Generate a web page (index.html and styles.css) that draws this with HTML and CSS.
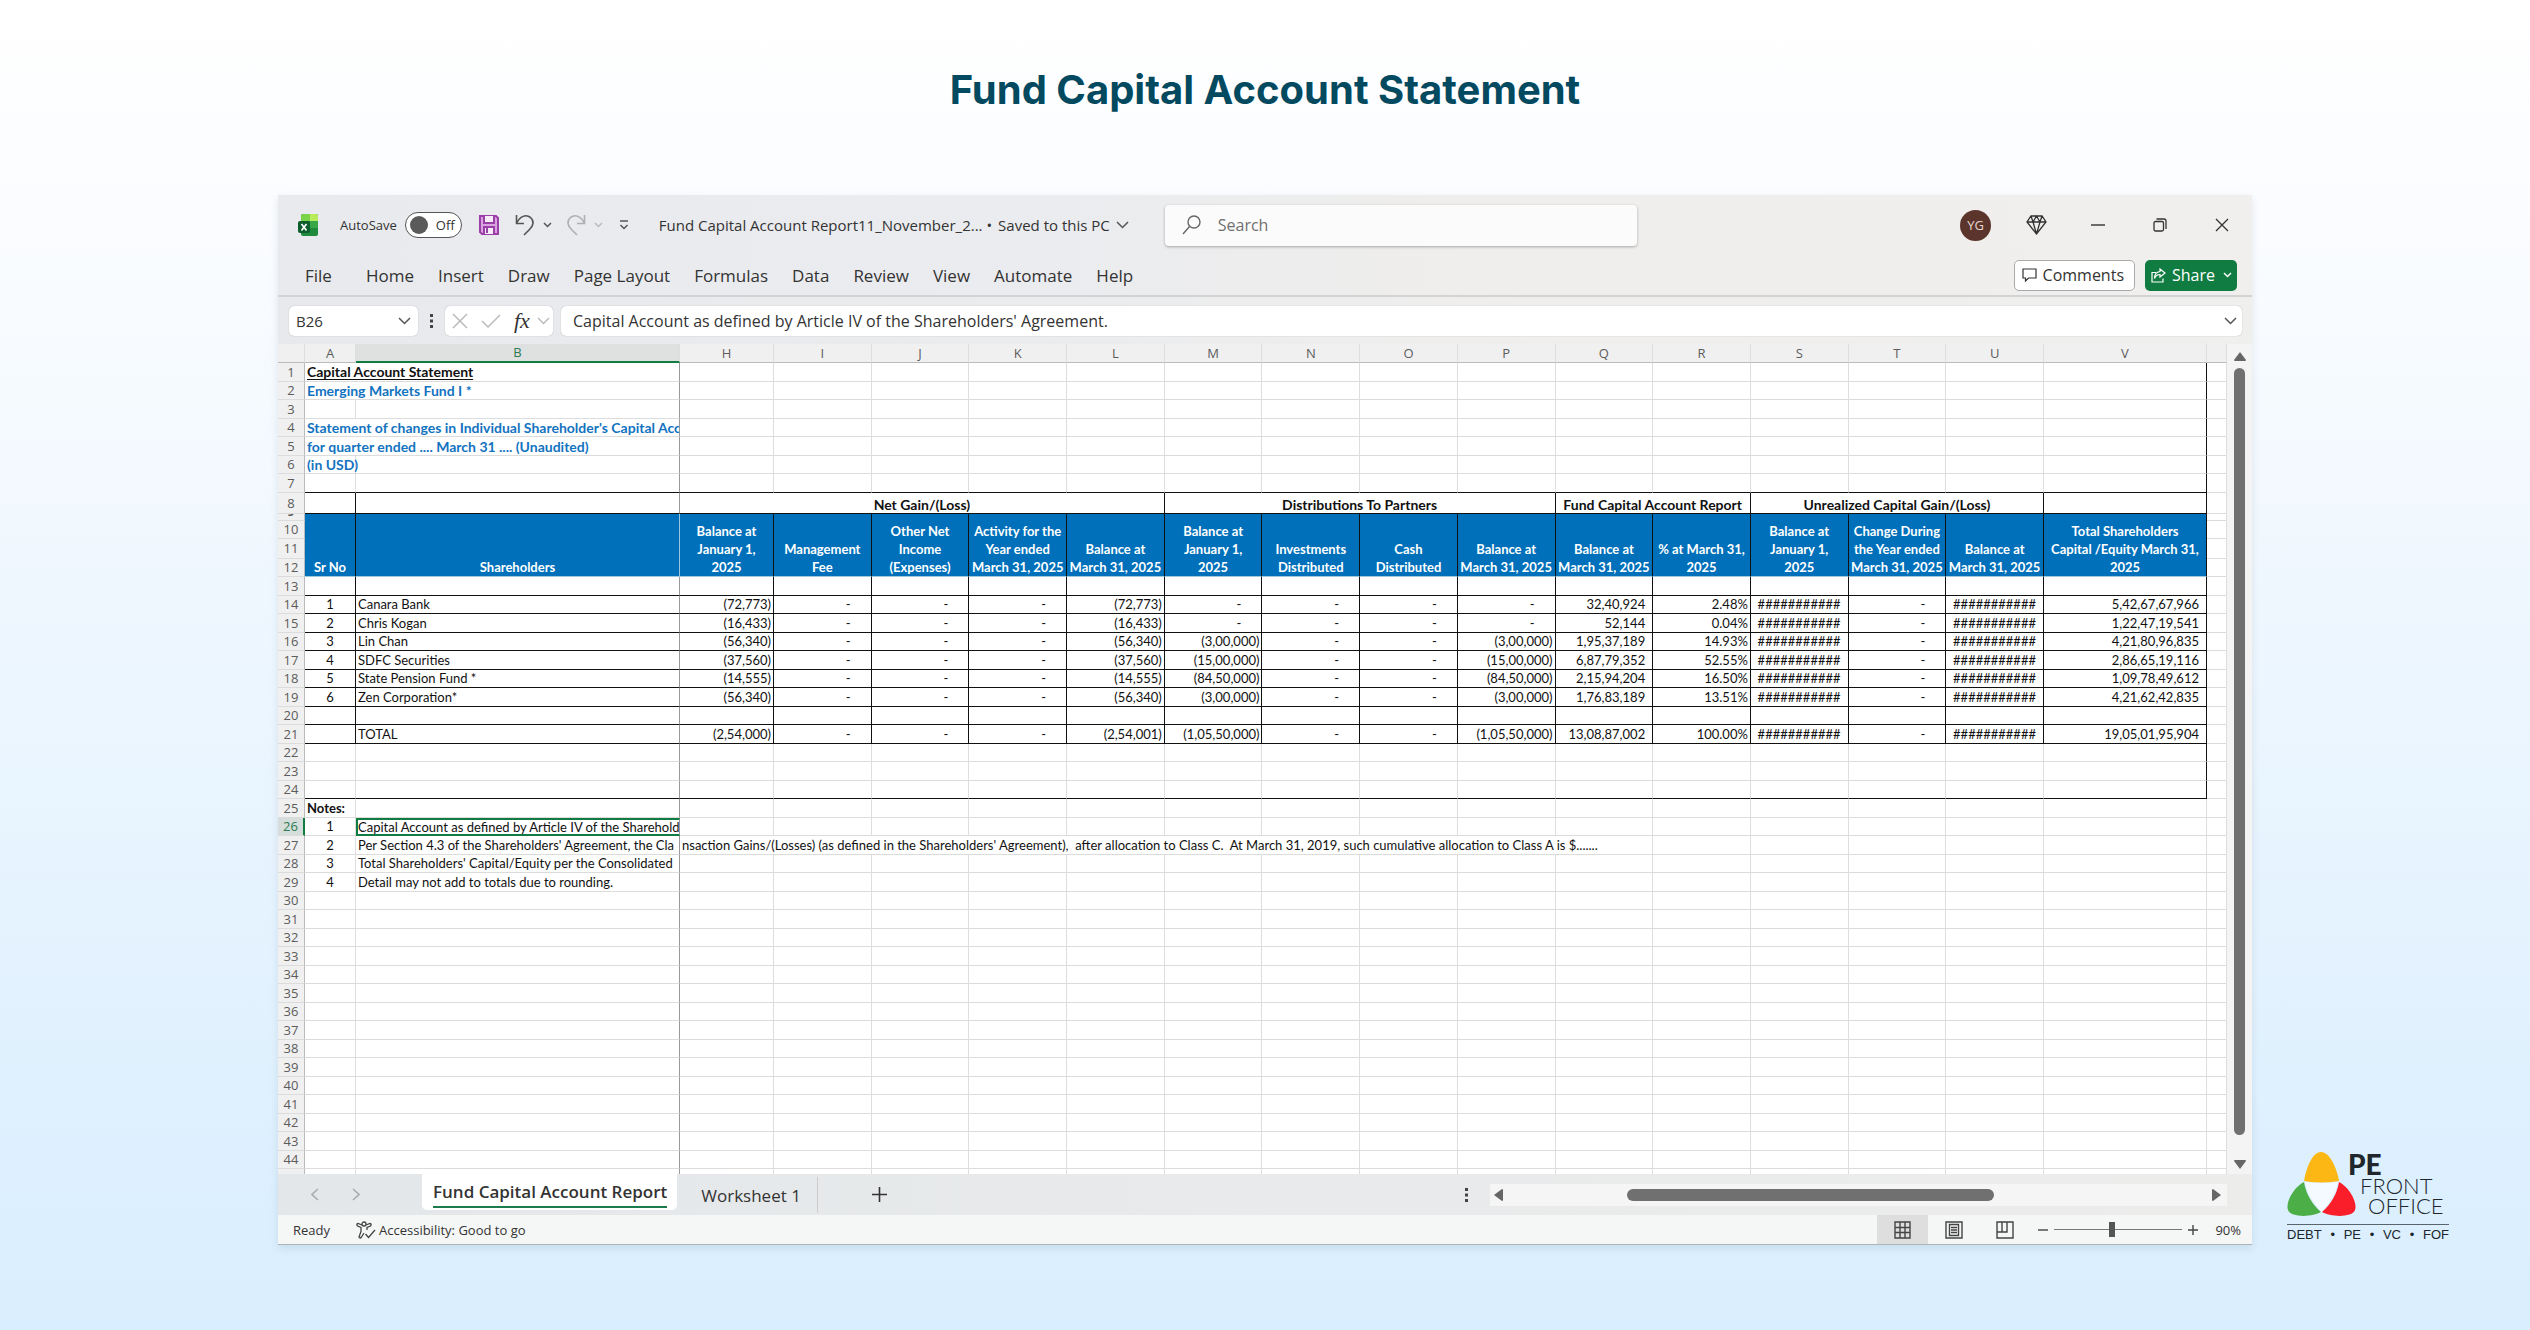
FILE: index.html
```html
<!DOCTYPE html>
<html lang="en">
  <head>
    <meta charset="utf-8">
    <title>Fund Capital Account Statement</title>
    <link rel="stylesheet" href="styles.css">
  </head>
  <body>
    <h1>Fund Capital Account Statement</h1>
    <main>
      <div class="window">
        <header>
          <div class="titlebar">
            <svg class="xl" width="20" height="22" viewBox="0 0 20 22"><rect x="3" y="0" width="17" height="22" rx="2" fill="#1f8a3c"/><path d="M5 0h7v7H3V2a2 2 0 0 1 2-2z" fill="#7bd34a"/><path d="M12 0h6a2 2 0 0 1 2 2v5h-8z" fill="#b8ec5a"/><path d="M12 7h8v7h-8z" fill="#38a745"/><rect x="0" y="7" width="12" height="12" rx="2" fill="#0d5c2c"/><path d="M3.5 10l5 6.500M8.500 10l-5 6.500" stroke="#fff" stroke-width="1.700"/></svg>
            <label class="autosave">AutoSave <span class="toggle"><input type="checkbox"><span>Off</span></span></label>
            <button class="save" aria-label="Save"><svg width="22" height="22" viewBox="0 0 22 22" fill="none" stroke="#9b3fa8" stroke-width="2"><path d="M2 2h16l2 2v16H4l-2-2z" fill="#d9a3e0"/><path d="M6 2v7h10V2M6 20v-7h10v7" fill="#f6ecf8"/><path d="M9 14v5"/></svg></button>
            <button class="undo" aria-label="Undo"><svg width="20" height="24" viewBox="0 0 20 24" fill="none" stroke="#555" stroke-width="1.600"><path d="M1.500 2v8.500H9M1.500 10.500C5 3 11 1 15.500 4.500c4 3.500 3 8-1 12L9 22"/></svg></button>
            <button class="more" aria-label="Undo list"><svg width="9" height="6" viewBox="0 0 9 6"><path d="M1 1l3.500 3.500L8 1"/></svg></button>
            <button class="redo" aria-label="Redo"><svg width="20" height="24" viewBox="0 0 20 24" fill="none" stroke="#aeb0b3" stroke-width="1.600"><path d="M18.500 2v8.500H11M18.500 10.500C15 3 9 1 4.500 4.500c-4 3.500-3 8 1 12L11 22"/></svg></button>
            <button class="more faint" aria-label="Redo list"><svg width="9" height="6" viewBox="0 0 9 6"><path d="M1 1l3.500 3.500L8 1"/></svg></button>
            <button class="more custom" aria-label="Customize toolbar"><svg width="10" height="10" viewBox="0 0 10 10"><path d="M1 1h8M1.500 5L5 8.500 8.500 5"/></svg></button>
            <div class="doc">Fund Capital Account Report11_November_2... • <span>Saved to this PC</span> <svg width="13" height="8" viewBox="0 0 13 8"><path d="M1 1l5.500 5.500L12 1"/></svg></div>
            <label class="search"><svg width="19" height="20" viewBox="0 0 19 20" fill="none" stroke="#666" stroke-width="1.400"><circle cx="12" cy="7" r="6"/><path d="M7.500 11.500L1 19"/></svg><input type="text" placeholder="Search" aria-label="Search"></label>
            <div class="controls">
              <button class="avatar">YG</button>
              <button aria-label="Premium"><svg width="21" height="20" viewBox="0 0 21 20" fill="none" stroke="#333" stroke-width="1.300"><path d="M5 1h11l4 6-9.500 12L1 7zM1 7h19M7 7l3.500 12L14 7M5 1l2 6 3.500-6L14 7l2-6"/></svg></button>
              <button aria-label="Minimize"><svg width="14" height="14" viewBox="0 0 14 14" stroke="#333" stroke-width="1.400"><path d="M0 7h14"/></svg></button>
              <button aria-label="Restore"><svg width="14" height="14" viewBox="0 0 14 14" fill="none" stroke="#333" stroke-width="1.300"><rect x="1" y="3.500" width="9.500" height="9.500" rx="1.500"/><path d="M3.500 1H11a2 2 0 0 1 2 2v8"/></svg></button>
              <button aria-label="Close"><svg width="14" height="14" viewBox="0 0 14 14" stroke="#333" stroke-width="1.300"><path d="M1 1l12 12M13 1L1 13"/></svg></button>
            </div>
          </div>
          <nav>
            <a href="#" class="file">File</a>
            <a href="#">Home</a>
            <a href="#">Insert</a>
            <a href="#">Draw</a>
            <a href="#">Page Layout</a>
            <a href="#">Formulas</a>
            <a href="#">Data</a>
            <a href="#">Review</a>
            <a href="#">View</a>
            <a href="#">Automate</a>
            <a href="#">Help</a>
            <button class="comments"><svg width="15" height="14" viewBox="0 0 15 14" fill="none" stroke="#333" stroke-width="1.200"><path d="M1 1h13v9H6.500L3.500 13v-3H1z"/></svg>Comments</button>
            <button class="share"><svg width="15" height="15" viewBox="0 0 15 15" fill="none" stroke="#fff" stroke-width="1.200"><path d="M5 4.500H1V14h11v-3.500M9 1l5 4-5 4V6.500C6 6.500 4.500 8 3.500 10.500 3.500 6.500 5.500 4 9 3.500z"/></svg>Share<svg class="down" width="9" height="6" viewBox="0 0 9 6"><path d="M1 1l3.500 3.500L8 1"/></svg></button>
          </nav>
        </header>

        <div class="formulabar">
          <label class="box namebox"><input type="text" value="B26" aria-label="Name box"><svg width="13" height="8" viewBox="0 0 13 8"><path d="M1 1l5.500 5.500L12 1"/></svg></label>
          <svg class="dots" width="3" height="14" viewBox="0 0 3 14"><path d="M0 0h3v3H0zM0 5.500h3v3H0zM0 11h3v3H0z"/></svg>
          <div class="box fx">
            <button aria-label="Cancel"><svg width="16" height="16" viewBox="0 0 16 16"><path d="M1 1l14 14M15 1L1 15"/></svg></button>
            <button aria-label="Enter"><svg width="20" height="14" viewBox="0 0 20 14"><path d="M1 7l6 6L19 1"/></svg></button>
            <button class="fn" aria-label="Insert function">fx</button>
            <button aria-label="Function list"><svg width="13" height="8" viewBox="0 0 13 8"><path d="M1 1l5.500 5.500L12 1"/></svg></button>
          </div>
          <label class="box formula"><input type="text" value="Capital Account as defined by Article IV of the Shareholders' Agreement." aria-label="Formula"><svg width="13" height="8" viewBox="0 0 13 8"><path d="M1 1l5.500 5.500L12 1"/></svg></label>
        </div>

        <div class="sheet">
          <div class="cells">
            <table id="grid">
              <colgroup><col class="c-num"><col class="c-a"><col class="c-b"><col class="c-h"><col span="13"><col class="c-v"><col class="c-x"></colgroup>
              <thead></thead>
              <tbody></tbody>
            </table>
          </div>
          <div class="vscroll">
            <svg width="12" height="9" viewBox="0 0 12 9"><path d="M6 0l6 8q0 1-1 1H1q-1 0-1-1z"/></svg>
            <div class="thumb"></div>
            <svg width="12" height="9" viewBox="0 0 12 9"><path d="M6 9l6-8q0-1-1-1H1Q0 0 0 1z"/></svg>
          </div>
        </div>

        <div class="tabs">
          <button class="step" aria-label="Previous sheet"><svg width="8" height="13" viewBox="0 0 8 13"><path d="M7 1L1 6.500 7 12"/></svg></button>
          <button class="step next" aria-label="Next sheet"><svg width="8" height="13" viewBox="0 0 8 13"><path d="M1 1l6 5.500L1 12"/></svg></button>
          <button class="tab active"><span>Fund Capital Account Report</span></button>
          <button class="tab">Worksheet 1</button>
          <button class="add" aria-label="New sheet"><svg width="15" height="15" viewBox="0 0 15 15"><path d="M7.500 0v15M0 7.500h15"/></svg></button>
          <svg class="dots" width="3" height="14" viewBox="0 0 3 14"><path d="M0 0h3v3H0zM0 5.500h3v3H0zM0 11h3v3H0z"/></svg>
          <div class="hscroll">
            <svg width="9" height="12" viewBox="0 0 9 12"><path d="M0 6l8-6q1 0 1 1v10q0 1-1 1z"/></svg>
            <div class="track"><div class="thumb"></div></div>
            <svg width="9" height="12" viewBox="0 0 9 12"><path d="M9 6L1 0Q0 0 0 1v10q0 1 1 1z"/></svg>
          </div>
        </div>

        <footer>
          <span class="ready">Ready</span>
          <svg width="20" height="18" viewBox="0 0 20 18" fill="none" stroke="#444" stroke-width="1.300"><circle cx="8" cy="3" r="2"/><path d="M6 4L2 2.500Q0 3 1.500 5L5 6.500v4L3 16q1 2 2.500 0L8 12M10 4l4-1.500q2 .5.500 2.500L11 6.500V9M9.500 13l3 3.500L19 9"/></svg>
          <span class="access">Accessibility: Good to go</span>
          <div class="views">
            <button class="on" aria-label="Normal"><svg width="17" height="18" viewBox="0 0 17 18"><path d="M1 1h15v16H1zM6 1v16M11 1v16M1 6.500h15M1 11.500h15"/></svg></button>
            <button aria-label="Page layout"><svg width="18" height="18" viewBox="0 0 18 18"><path d="M1 1h16v16H1zM4.500 3.500h9v11h-9zM6 6.500h6M6 9h6M6 11.500h6"/></svg></button>
            <button aria-label="Page break preview"><svg width="18" height="18" viewBox="0 0 18 18"><path d="M1 1h16v16H1zM1 11h10V1M6 1v10"/></svg></button>
          </div>
          <button class="zoom" aria-label="Zoom out"><svg width="10" height="10" viewBox="0 0 10 10"><path d="M0 5h10"/></svg></button>
          <input type="range" min="0" max="100" value="45" aria-label="Zoom">
          <button class="zoom" aria-label="Zoom in"><svg width="10" height="10" viewBox="0 0 10 10"><path d="M0 5h10M5 0v10"/></svg></button>
          <span class="percent">90%</span>
        </footer>
      </div>

      <div class="logo">
        <div class="mark">
          <svg width="69" height="64" viewBox="0 0 69 64">
            <path d="M34 0C43 0 50 17 52 29Q34 32 17 29C19 17 25 0 34 0z" fill="#fdb714"/>
            <path d="M17 30C8 34-2 50 1 58c3 8 25 7 33 2C25 52 19 42 17 30z" fill="#4cae47"/>
            <path d="M52 30c9 4 19 20 16 28-3 8-25 7-33 2C44 52 50 42 52 30z" fill="#f91e29"/>
            <path d="M18 30Q34 32 51 30 48 46 34.500 60 21 46 18 30z" fill="#f4faff"/>
          </svg>
          <div class="words"><b>PE</b><span>FRONT</span><span class="office">OFFICE</span></div>
        </div>
        <div class="tags"><span>DEBT</span><span>•</span><span>PE</span><span>•</span><span>VC</span><span>•</span><span>FOF</span></div>
      </div>
    </main>
    <script src="sheet.js"></script>
  </body>
</html>
```

FILE: styles.css
```css
* {
  margin: 0;
  padding: 0;
  box-sizing: border-box;
}
body {
  min-height: 100vh;
  background: linear-gradient(#ffffff, #fafcff 18%, #def0fe 85%, #d9eefe);
  font-family: "Open Sans", "Noto Sans", sans-serif;
  color: #333;
}
button, input {
  font: inherit;
  color: inherit;
  border: 0;
  background: none;
  outline: 0;
}
button {
  display: flex;
  align-items: center;
}
svg {
  flex: none;
  display: block;
}
h1 {
  padding: 66px 0 81px;
  font: 700 40px/48px Inter, sans-serif;
  color: #034a60;
  text-align: center;
}
main {
  display: flex;
  align-items: flex-end;
  padding: 0 81px 0 278px;
}
.window {
  flex: 1;
  min-width: 0;
  background: #f0f0f0;
  border-bottom: 1px solid #aab4ba;
  box-shadow: 0 3px 8px rgba(60,80,90,0.12);
}

/* title bar and menu */
header {
  background: linear-gradient(90deg, #e8eaed, #ebecef 40%, #efeeec 60%, #f0efee);
  border-bottom: 2px solid #d2d3d5;
}
.titlebar {
  display: flex;
  align-items: center;
  height: 60px;
  padding: 0 23px 0 20px;
  font-size: 15px;
}
.autosave {
  display: flex;
  align-items: center;
  gap: 8px;
  margin-left: 22px;
  font-size: 13px;
}
.toggle {
  display: flex;
  align-items: center;
  width: 57px;
  height: 26px;
  padding-left: 4px;
  gap: 8px;
  border: 1px solid #555;
  border-radius: 13px;
  background: #fff;
}
.toggle input {
  appearance: none;
  width: 18px;
  height: 18px;
  border-radius: 50%;
  background: #5a5a5a;
}
.save { margin-left: 16px; }
.undo { margin-left: 15px; }
.redo { margin-left: 14px; }
.more { margin-left: 8px; }
.custom { margin-left: 16px; }
.more svg, .doc svg, .box svg, .down {
  fill: none;
  stroke: #555;
  stroke-width: 1.5;
}
.more.faint svg { stroke: #bbb; }
.doc {
  display: flex;
  align-items: center;
  gap: 6px;
  margin-left: 30px;
  white-space: nowrap;
}
.search {
  display: flex;
  align-items: center;
  gap: 17px;
  width: 472px;
  height: 41px;
  margin-left: 36px;
  padding-left: 17px;
  background: #fbfbfb;
  border-radius: 4px;
  box-shadow: 0 1px 3px rgba(0,0,0,0.3);
  font-size: 16px;
}
.search input { flex: 1; }
.search input::placeholder {
  color: #707070;
  opacity: 1;
}
.controls {
  display: flex;
  align-items: center;
  margin-left: auto;
  gap: 48px;
}
.controls .avatar {
  justify-content: center;
  width: 31px;
  height: 31px;
  margin-right: -13px;
  border-radius: 50%;
  background: #5b352c;
  color: #e8d6d0;
  font-size: 13px;
}
.controls button:nth-child(2) { margin-right: -4px; }
nav {
  display: flex;
  align-items: center;
  gap: 24px;
  height: 40px;
  padding: 0 15px 0 27px;
  font-size: 17px;
}
nav a {
  color: #333;
  text-decoration: none;
}
.file { margin-right: 10px; }
.comments, .share {
  gap: 6px;
  height: 31px;
  padding: 0 10px 0 7px;
  border-radius: 5px;
  font-size: 16px;
}
.comments {
  margin-left: auto;
  margin-right: -14px;
  border: 1px solid #aaa;
  background: #fff;
}
.share {
  background: #107c41;
  color: #fff;
  padding: 0 5px 0 6px;
}
.share .down {
  stroke: #fff;
  margin-left: 2px;
}

/* formula bar */
.formulabar {
  display: flex;
  align-items: center;
  height: 47px;
  padding: 0 10px 0 11px;
  background: linear-gradient(90deg, #e7e9ec, #ebecee 40%, #efeeed 60%, #efefee);
  font-size: 16px;
}
.box {
  display: flex;
  align-items: center;
  height: 30px;
  padding: 0 7px;
  border-radius: 5px;
  background: #fff;
  box-shadow: 0 0 1px rgba(0,0,0,0.35);
}
.box input {
  flex: 1;
  width: 100%;
  min-width: 0;
}
.namebox {
  width: 129px;
  font-size: 15px;
}
.dots {
  margin: 0 12px;
  fill: #444;
}
.fx {
  gap: 13px;
  width: 108px;
  padding: 0 2px 0 7px;
}
.fx svg { stroke: #bbb; }
.fx .fn {
  margin-right: -6px;
  font: italic 22px/22px "Liberation Serif", serif;
}
.formula {
  flex: 1;
  margin-left: 8px;
  padding: 0 5px 0 12px;
}

/* worksheet */
.sheet {
  display: flex;
  height: 830px;
  overflow: hidden;
}
.cells {
  flex: 1;
  min-width: 0;
}
table {
  width: 100%;
  table-layout: fixed;
  border-collapse: separate;
  border-spacing: 0;
  font: 13px/17px Lato, sans-serif;
  color: #111;
}
.c-num { width: 27px; }
.c-a { width: 51px; }
.c-b { width: 324px; }
.c-h { width: 94px; }
.c-v { width: 163px; }
.c-x { width: 20px; }
tr { height: 18px; }
tbody tr:nth-child(odd) { height: 19px; }
tbody tr.group { height: 21px; }
tbody tr.thin { height: 7px; }
.thin .num span {
  display: flex;
  align-items: flex-end;
  justify-content: center;
  height: 6px;
  overflow: hidden;
}
td, th {
  padding: 0 2px;
  border-right: 1px solid #dedede;
  border-bottom: 1px solid #dcdcdc;
  background: #fff;
  white-space: nowrap;
  overflow: hidden;
  text-align: left;
}
td.col-b {
  border-right-color: #999;
}
thead th, th.num {
  background: #f0f0f0;
  color: #5c5c5c;
  font: 13px/17px "Open Sans", sans-serif;
  text-align: center;
}
thead th {
  height: 19px;
  border-bottom-color: #bbb;
}
thead th.col-b {
  background: #dfe0e0;
  color: #2b7a50;
  border-bottom: 2px solid #107c41;
}
th.num {
  padding: 0;
  border-right-color: #bbb;
}
th.sel {
  background: #d5dedb;
  color: #2b7a50;
  border-right: 2px solid #107c41;
}
.title {
  font-size: 14px;
  line-height: 16px;
  font-weight: bold;
  text-decoration: underline;
  text-decoration-thickness: 1px;
  text-decoration-skip-ink: none;
  text-underline-offset: 2px;
}
.blue {
  font-size: 14px;
  font-weight: bold;
  color: #1373bf;
}
.bold { font-weight: bold; }
td.spill { overflow: visible; }
.col-v.edge, .line { border-right-color: #111; }
.under td:not(.x) { border-bottom-color: #111; }
.group td, .head th {
  font-weight: bold;
  text-align: center;
}
.group td {
  vertical-align: bottom;
  font-size: 14px;
}
.head th:not(.num) {
  height: 63px;
  vertical-align: bottom;
  background: #0070ba;
  color: #fff;
  line-height: 18px;
  border-right-color: #111;
  border-bottom: 1px solid #9cc7e0;
  padding: 0;
}
.head th.col-b:not(.num) { border-right-color: #9cc7e0; }
.mid { text-align: center; }
.fig { text-align: right; }
td.dash { padding-right: 20px; }
td.pos { padding-right: 7px; }
td.cursor {
  border: 2px solid #107c41;
  border-right: 1px solid #999;
  padding: 0;
  line-height: 14px;
}
.vscroll {
  display: flex;
  flex-direction: column;
  align-items: center;
  gap: 7px;
  width: 25px;
  padding: 8px 0 5px;
  background: #f4f4f4;
  fill: #666;
}
.vscroll .thumb {
  flex: 1;
  width: 11px;
  margin-bottom: 18px;
  border-radius: 6px;
  background: #707070;
}

/* sheet tabs */
.tabs {
  display: flex;
  align-items: center;
  height: 41px;
  padding-right: 25px;
  background: linear-gradient(90deg, #e4e7ea, #e8eaeb 50%, #ececeb);
  font-size: 17px;
}
.tabs button svg {
  fill: none;
  stroke: #aaa;
  stroke-width: 1.6;
}
.step { margin-left: 33px; }
.tab {
  height: 36px;
  margin-left: 7px;
  padding: 2px 16px 0 17px;
  border-right: 1px solid #ccc;
}
.tab.active {
  align-self: flex-start;
  margin-left: 62px;
  padding: 0 10px 0 11px;
  border: 0;
  border-radius: 0 0 5px 5px;
  background: #fff;
  font-weight: 600;
}
.active span {
  border-bottom: 2px solid #1c7a4c;
  line-height: 29px;
}
.add { margin-left: 54px; }
.tabs .add svg { stroke: #333; }
.tabs .dots { margin: 0 22px 0 auto; }
.hscroll {
  display: flex;
  align-items: center;
  width: 737px;
  height: 22px;
  padding: 0 6px 0 4px;
  background: #f5f5f5;
  fill: #666;
}
.track {
  flex: 1;
  padding: 0 30% 0 17%;
}
.track .thumb {
  height: 12px;
  border-radius: 6px;
  background: #707070;
}

/* status bar */
footer {
  display: flex;
  align-items: center;
  height: 29px;
  padding: 0 11px 0 15px;
  background: #f5f6f6;
  font-size: 13px;
}
.ready { margin-right: 26px; }
.access { margin-left: 3px; }
.views {
  display: flex;
  margin-left: auto;
  margin-right: 8px;
}
.views button {
  justify-content: center;
  width: 51px;
  height: 29px;
}
.views .on { background: #dedede; }
.views svg, .zoom svg {
  fill: none;
  stroke: #444;
  stroke-width: 1.4;
}
footer input {
  appearance: none;
  width: 128px;
  height: 16px;
  margin: 0 6px;
  background: linear-gradient(#777, #777) center / 100% 1px no-repeat;
}
footer input::-webkit-slider-thumb {
  appearance: none;
  width: 6px;
  height: 15px;
  background: #555;
}
.percent { margin-left: 17px; }

/* logo */
.logo {
  width: 162px;
  margin-left: 35px;
  color: #20262c;
}
.mark {
  display: flex;
  align-items: flex-end;
  padding-bottom: 8px;
  border-bottom: 1px solid #5a646c;
}
.words {
  display: flex;
  flex-direction: column;
  margin-left: -8px;
  font: 300 22px/20px Lato, sans-serif;
}
.words b {
  font-size: 28px;
  line-height: 24px;
  font-weight: 900;
}
.words span { margin-left: 12px; }
.words .office { margin-left: 20px; }
.tags {
  display: flex;
  justify-content: space-between;
  font: 13px/20px "Liberation Sans", sans-serif;
}
```

FILE: sheet.js
```js
// columns C to G are hidden in the workbook
var cols = 'ABHIJKLMNOPQRSTUV'.split('');
var hash = '###########';

var heads = ['Sr No', 'Shareholders', 'Balance at<br>January 1,<br>2025', 'Management<br>Fee',
  'Other Net<br>Income<br>(Expenses)', 'Activity for the<br>Year ended<br>March 31, 2025',
  'Balance at<br>March 31, 2025', 'Balance at<br>January 1,<br>2025', 'Investments<br>Distributed',
  'Cash<br>Distributed', 'Balance at<br>March 31, 2025', 'Balance at<br>March 31, 2025',
  '% at March 31,<br>2025', 'Balance at<br>January 1,<br>2025',
  'Change During<br>the Year ended<br>March 31, 2025', 'Balance at<br>March 31, 2025',
  'Total Shareholders<br>Capital /Equity March 31,<br>2025'];

// A, B, H, L, M, P, Q, R, V; the other columns are the same in every row
var data = {
  14: ['1', 'Canara Bank', '(72,773)', '(72,773)', '-', '-', '32,40,924', '2.48%', '5,42,67,67,966'],
  15: ['2', 'Chris Kogan', '(16,433)', '(16,433)', '-', '-', '52,144', '0.04%', '1,22,47,19,541'],
  16: ['3', 'Lin Chan', '(56,340)', '(56,340)', '(3,00,000)', '(3,00,000)', '1,95,37,189', '14.93%', '4,21,80,96,835'],
  17: ['4', 'SDFC Securities', '(37,560)', '(37,560)', '(15,00,000)', '(15,00,000)', '6,87,79,352', '52.55%', '2,86,65,19,116'],
  18: ['5', 'State Pension Fund *', '(14,555)', '(14,555)', '(84,50,000)', '(84,50,000)', '2,15,94,204', '16.50%', '1,09,78,49,612'],
  19: ['6', 'Zen Corporation*', '(56,340)', '(56,340)', '(3,00,000)', '(3,00,000)', '1,76,83,189', '13.51%', '4,21,62,42,835'],
  21: ['', 'TOTAL', '(2,54,000)', '(2,54,001)', '(1,05,50,000)', '(1,05,50,000)', '13,08,87,002', '100.00%', '19,05,01,95,904']
};

var titles = {
  1: ['title', 'Capital Account Statement'],
  2: ['blue', 'Emerging Markets Fund I *'],
  4: ['blue', "Statement of changes in Individual Shareholder's Capital Acco"],
  5: ['blue', 'for quarter ended .... March 31 .... (Unaudited)']
};

var notes = {
  26: ['1', 'Capital Account as defined by Article IV of the Sharehold'],
  27: ['2', "Per Section 4.3 of the Shareholders' Agreement, the Cla"],
  28: ['3', "Total Shareholders' Capital/Equity per the Consolidated"],
  29: ['4', 'Detail may not add to totals due to rounding.']
};
var spillText = "nsaction Gains/(Losses) (as defined in the Shareholders' Agreement),&nbsp; after allocation to Class C.&nbsp; At March 31, 2019, such cumulative allocation to Class A is $.......";

function td(cls, text, span) {
  return '<td class="' + cls + '"' + (span ? ' colspan="' + span + '"' : '') + '>' + (text || '') + '</td>';
}

function blank(from, cls) {
  return cols.slice(from).map(function (c) {
    return td('col-' + c.toLowerCase() + ' ' + cls);
  }).join('');
}

function figures(d) {
  var v = [d[2], '-', '-', '-', d[3], d[4], '-', '-', d[5], d[6], d[7], hash, '-', hash, d[8]];
  return v.map(function (t, i) {
    var cls = 'fig line';
    if (t === '-') cls += ' dash';
    else if (t[0] !== '(' && i !== 10) cls += ' pos';
    return td(cls, t);
  }).join('');
}

function row(r) {
  var edge = r <= 24 ? 'edge' : '';
  var cls = '', body;
  if (titles[r]) {
    body = td('col-b ' + titles[r][0], titles[r][1], 2) + blank(2, edge);
  } else if (r === 6) {
    body = td('blue spill', '(in USD)') + blank(1, edge);
  } else if (r === 8) {
    cls = 'group under';
    body = td('line') + td('col-b') + td('line', 'Net Gain/(Loss)', 5) + td('line', 'Distributions To Partners', 4) +
      td('line', 'Fund Capital Account Report', 2) + td('line', 'Unrealized Capital Gain/(Loss)', 3) + td('line');
  } else if (r === 9) {
    cls = 'head thin';
    body = heads.map(function (h, i) {
      return '<th rowspan="4"' + (i === 1 ? ' class="col-b"' : '') + '>' + h + '</th>';
    }).join('');
  } else if (r > 9 && r < 13) {
    body = '';
  } else if (data[r]) {
    cls = 'under';
    body = td('mid line', data[r][0]) + td('col-b', data[r][1]) + figures(data[r]);
  } else if (r === 13 || r === 20) {
    cls = 'under';
    body = td('line') + td('col-b') + blank(2, 'line');
  } else if (r === 25) {
    body = td('bold spill', 'Notes:') + blank(1, '');
  } else if (notes[r]) {
    body = td('mid', notes[r][0]) + td(r === 26 ? 'col-b cursor' : 'col-b', notes[r][1]);
    body += r === 27 ? td('', spillText, 10) + blank(12, '') : blank(2, '');
  } else {
    if (r === 7 || r === 24) cls = 'under';
    body = blank(0, edge);
  }
  return '<tr class="' + cls + '"><th class="num' + (r === 26 ? ' sel' : '') + '"><span>' + r + '</span></th>' + body + td('x') + '</tr>';
}

document.querySelector('#grid thead').innerHTML = '<tr><th></th>' + cols.map(function (c) {
  return '<th class="col-' + c.toLowerCase() + '">' + c + '</th>';
}).join('') + '<th></th></tr>';

var html = '';
for (var r = 1; r <= 45; r++) html += row(r);
document.querySelector('#grid tbody').innerHTML = html;
```
